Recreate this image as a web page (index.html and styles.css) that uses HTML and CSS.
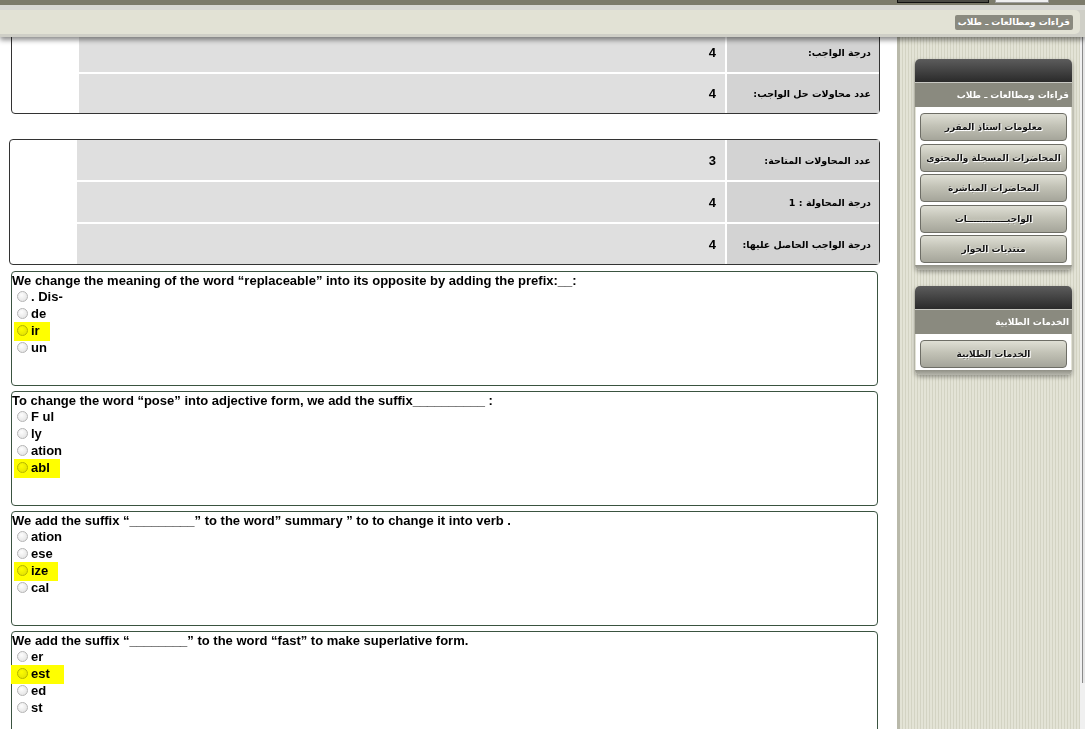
FILE: index.html
```html
<!DOCTYPE html>
<html lang="ar">
<head>
  <meta charset="UTF-8">
  <meta name="viewport" content="width=device-width, initial-scale=1.0">
  <title>الواجبات - قراءات ومطالعات</title>
  <link rel="stylesheet" href="styles.css">
</head>
<body>
  <!-- Header -->
  <div class="header">
    <div class="topline">
      <span class="top-btn dark"></span>
      <span class="top-btn light"></span>
    </div>
    <div class="subline"></div>
    <div class="crumbbar">
      <span class="crumb">قراءات ومطالعات ـ طلاب</span>
    </div>
  </div>

  <div class="layout">
    <div class="main">
      <!-- Homework info -->
      <div class="info-box first">
        <div class="info-row">
          <div class="blank"></div>
          <div class="val">4</div>
          <div class="lbl">درجة الواجب:</div>
        </div>
        <div class="info-row">
          <div class="blank"></div>
          <div class="val">4</div>
          <div class="lbl">عدد محاولات حل الواجب:</div>
        </div>
      </div>

      <!-- Attempt info -->
      <div class="info-box second">
        <div class="info-row">
          <div class="blank"></div>
          <div class="val">3</div>
          <div class="lbl">عدد المحاولات المتاحة:</div>
        </div>
        <div class="info-row">
          <div class="blank"></div>
          <div class="val">4</div>
          <div class="lbl">درجة المحاولة : 1</div>
        </div>
        <div class="info-row">
          <div class="blank"></div>
          <div class="val">4</div>
          <div class="lbl">درجة الواجب الحاصل عليها:</div>
        </div>
      </div>

      <!-- Questions -->
      <div class="question">
        <div class="q-text">We change the meaning of the word “replaceable” into its opposite by adding the prefix:__:</div>
        <div class="option"><span class="radio"></span>. Dis-</div>
        <div class="option"><span class="radio"></span>de</div>
        <div class="option"><span class="picked"><span class="radio"></span>ir</span></div>
        <div class="option"><span class="radio"></span>un</div>
      </div>

      <div class="question">
        <div class="q-text">To change the word “pose” into adjective form, we add the suffix__________ :</div>
        <div class="option"><span class="radio"></span>F ul</div>
        <div class="option"><span class="radio"></span>ly</div>
        <div class="option"><span class="radio"></span>ation</div>
        <div class="option"><span class="picked"><span class="radio"></span>abl</span></div>
      </div>

      <div class="question">
        <div class="q-text">We add the suffix “_________” to the word” summary ” to to change it into verb .</div>
        <div class="option"><span class="radio"></span>ation</div>
        <div class="option"><span class="radio"></span>ese</div>
        <div class="option"><span class="picked"><span class="radio"></span>ize</span></div>
        <div class="option"><span class="radio"></span>cal</div>
      </div>

      <div class="question">
        <div class="q-text">We add the suffix “________” to the word “fast” to make superlative form.</div>
        <div class="option"><span class="radio"></span>er</div>
        <div class="option"><span class="picked wide"><span class="radio"></span>est</span></div>
        <div class="option"><span class="radio"></span>ed</div>
        <div class="option"><span class="radio"></span>st</div>
      </div>
    </div>

    <!-- Sidebar -->
    <div class="sidebar">
      <div class="panel">
        <div class="panel-head"></div>
        <div class="panel-title">قراءات ومطالعات ـ طلاب</div>
        <div class="panel-body">
          <a class="side-btn" href="#">معلومات استاذ المقرر</a>
          <a class="side-btn" href="#">المحاضرات المسجلة والمحتوى</a>
          <a class="side-btn" href="#">المحاضرات المباشرة</a>
          <a class="side-btn" href="#">الواجبـــــــــــــات</a>
          <a class="side-btn" href="#">منتديات الحوار</a>
        </div>
        <div class="panel-foot"></div>
      </div>

      <div class="panel">
        <div class="panel-head"></div>
        <div class="panel-title">الخدمات الطلابية</div>
        <div class="panel-body">
          <a class="side-btn" href="#">الخدمات الطلابية</a>
        </div>
        <div class="panel-foot"></div>
      </div>
    </div>

    <div class="scroll">
      <div class="thumb"></div>
    </div>
  </div>
</body>
</html>
```

FILE: styles.css
```css
html, body {
  margin: 0;
  padding: 0;
  height: 729px;
  overflow: hidden;
}

body {
  font-family: "Liberation Sans", Arial, sans-serif;
  background-color: #ffffff;
  color: #000;
}

/* Header */
.header {
  position: relative;
  z-index: 2;
  background-color: #cfcfc7;
  padding-bottom: 3px;
  box-shadow: 0 3px 5px rgba(0, 0, 0, 0.45);
}

.topline {
  height: 5px;
  background-color: #7c7b6b;
  display: flex;
  padding-left: 897px;
}

.top-btn {
  height: 2px;
  border: 1px solid #111;
  border-top: none;
}

.top-btn.dark {
  width: 90px;
  background-color: #4a4a44;
}

.top-btn.light {
  width: 52px;
  margin-left: 6px;
  background-color: #efefef;
  border-color: #a0a0a0;
}

.subline {
  height: 5px;
  background-color: #d7d7d3;
}

.crumbbar {
  height: 24px;
  margin-right: 5px;
  background-color: #e2e2d5;
  border-radius: 0 5px 5px 0;
  display: flex;
  justify-content: flex-end;
  align-items: center;
  padding-right: 7px;
}

.crumb {
  direction: rtl;
  background-color: #8a8a7f;
  color: #fff;
  font-family: "DejaVu Sans", sans-serif;
  font-size: 9px;
  font-weight: bold;
  padding: 1px 3px;
  line-height: 13px;
  border-radius: 2px;
}

/* Layout */
.layout {
  display: flex;
  height: 692px;
}

.main {
  width: 897px;
  flex-shrink: 0;
  overflow: hidden;
  background-color: #fff;
}

/* Info tables */
.info-box {
  border: 1px solid #333;
  border-radius: 4px;
  background-color: #fff;
  display: flex;
  flex-direction: column;
  gap: 2px;
}

.info-box.first {
  margin: -6px 0 0 11px;
  width: 867px;
}

.info-box.second {
  margin: 25px 0 0 9px;
  width: 869px;
}

.info-row {
  display: grid;
  grid-template-columns: 65px 1fr 152px;
  column-gap: 2px;
  height: 40px;
}

.info-box.first .info-row:last-child {
  height: 39px;
}

.val {
  background-color: #dfdfdf;
  display: flex;
  align-items: center;
  justify-content: flex-end;
  padding-right: 9px;
  font-size: 13px;
  font-weight: bold;
}

.lbl {
  background-color: #d3d3d3;
  direction: rtl;
  display: flex;
  align-items: center;
  padding-right: 8px;
  font-family: "DejaVu Sans", sans-serif;
  font-size: 9.5px;
  font-weight: bold;
}

/* Questions */
.question {
  margin: 5px 0 0 11px;
  width: 865px;
  height: 113px;
  border: 1px solid #3a5340;
  border-radius: 4px;
  font-size: 13px;
  font-weight: bold;
}

.info-box.second + .question {
  margin-top: 6px;
}

.q-text {
  padding-top: 1px;
  line-height: 15px;
  white-space: nowrap;
}

.option {
  line-height: 17px;
  height: 17px;
  padding-left: 5px;
}

.radio {
  display: inline-block;
  box-sizing: border-box;
  width: 11px;
  height: 11px;
  border: 1px solid #b4b4b4;
  border-radius: 50%;
  background: radial-gradient(circle at 40% 35%, #fdfdfd, #dedede);
  margin-right: 3px;
  vertical-align: -1px;
  mix-blend-mode: multiply;
}

.picked {
  display: inline-block;
  background-color: #ffff00;
  margin-left: -3px;
  padding: 0 10px 2px 3px;
  margin-bottom: -2px;
}

.picked.wide {
  margin-left: -6px;
  padding-left: 6px;
  padding-right: 14px;
}

/* Sidebar */
.sidebar {
  width: 180px;
  flex-shrink: 0;
  border-left: 3px solid #b9b9aa;
  background: repeating-linear-gradient(90deg, #e3e3d6 0 2px, #d3d3c3 2px 3px);
  padding-top: 22px;
}

.panel {
  width: 157px;
  margin: 0 0 16px 15px;
  border-radius: 5px;
  box-shadow: 0 2px 4px rgba(0, 0, 0, 0.35);
}

.panel-head {
  height: 23px;
  border-radius: 5px 5px 0 0;
  background: linear-gradient(#5c5c5c, #2a2a2a);
  border-bottom: 1px solid #c9c9c3;
}

.panel-title {
  height: 24px;
  background-color: #8a8a7f;
  color: #fff;
  direction: rtl;
  display: flex;
  align-items: center;
  padding-right: 3px;
  font-family: "DejaVu Sans", sans-serif;
  font-size: 9px;
  font-weight: bold;
}

.panel-body {
  background-color: #fff;
  margin: 0 1px;
  padding: 6px 4px 2px;
  display: flex;
  flex-direction: column;
  gap: 2.5px;
}

.side-btn {
  display: flex;
  align-items: center;
  justify-content: center;
  height: 26px;
  border: 1px solid #6e6e66;
  border-radius: 4px;
  background: linear-gradient(#dfdfd5, #c2c2b6 45%, #a5a59a);
  color: #111;
  text-decoration: none;
  direction: rtl;
  font-family: "DejaVu Sans", sans-serif;
  font-size: 9px;
  font-weight: bold;
  text-shadow: 0 0 2px #fff, 1px 1px 0 #fff;
}

.panel-foot {
  height: 5px;
  background: linear-gradient(#8f8f85, #b5b5ab);
  border-radius: 0 0 5px 5px;
}

/* Scrollbar strip */
.scroll {
  width: 5px;
  background-color: #f0f0f0;
}

.thumb {
  height: 646px;
  margin-left: 2px;
  border-left: 1px solid #8a8a8a;
  background-color: #e6e6e6;
}
```
